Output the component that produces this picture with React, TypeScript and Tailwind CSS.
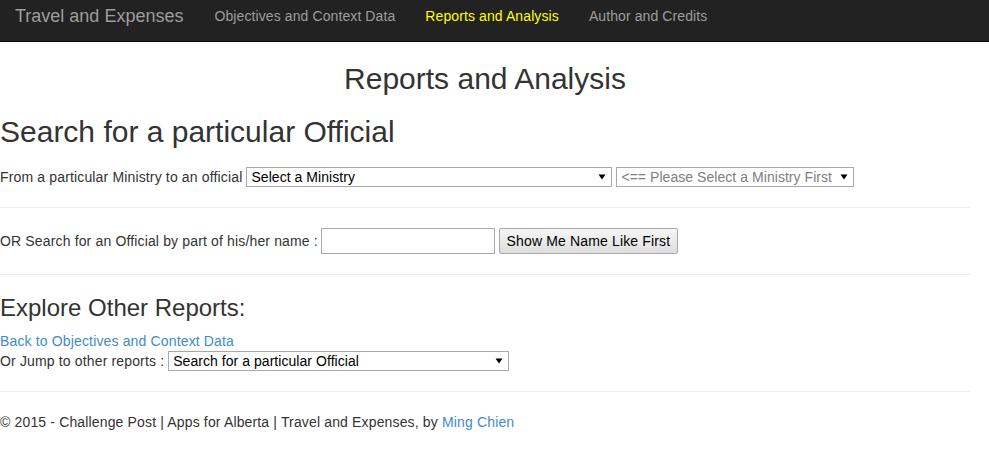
import React from "react";

function Arrow() {
  return (
    <svg width="8" height="6" viewBox="0 0 8 6" className="shrink-0">
      <polygon points="0.5,0.5 7.5,0.5 4,5.5" fill="#000" />
    </svg>
  );
}

function FakeSelect({ width, text, muted }: { width: string; text: string; muted?: boolean }) {
  return (
    <div
      className={`${width} h-[20px] border border-[#a9a9a9] bg-white flex items-center justify-between pl-[4px] pr-[5px] text-[14px] leading-[18px] tracking-[0.05px] ${
        muted ? "text-[#808080]" : "text-black"
      }`}
    >
      <span className="whitespace-nowrap overflow-hidden">{text}</span>
      <Arrow />
    </div>
  );
}

export default function App() {
  return (
    <div
      className="w-[989px] min-h-[458px] bg-white text-[#333] text-[14px] leading-[20px] tracking-[0.15px]"
      style={{ fontFamily: '"Liberation Sans", Arial, Helvetica, sans-serif' }}
    >
      <nav className="h-[42px] bg-[#222] border-b border-[#080808] flex items-start pt-[6px] tracking-[0.1px]">
        <a className="pl-[15px] pr-[15px] text-[18px] leading-[20px] text-[#9d9d9d] tracking-normal">Travel and Expenses</a>
        <a className="px-[15px] ml-[1px] text-[14px] leading-[20px] text-[#9d9d9d]">Objectives and Context Data</a>
        <a className="px-[15px] text-[14px] leading-[20px] text-[#ffff00]">Reports and Analysis</a>
        <a className="px-[15px] text-[14px] leading-[20px] text-[#9d9d9d]">Author and Credits</a>
      </nav>

      <div className="w-[970px]">
        <h2 className="mt-[20px] text-[30px] leading-[33px] text-center font-normal tracking-normal">Reports and Analysis</h2>
        <h2 className="mt-[20px] text-[30px] leading-[33px] font-normal tracking-normal">Search for a particular Official</h2>

        <div className="mt-[19px] flex items-center h-[20px]">
          <span className="whitespace-nowrap">From a particular Ministry to an official</span>
          <div className="ml-[4px]">
            <FakeSelect width="w-[366px]" text="Select a Ministry" />
          </div>
          <div className="ml-[4px]">
            <FakeSelect width="w-[238px]" text="<== Please Select a Ministry First" muted />
          </div>
        </div>

        <hr className="mt-[20px] mb-[20px] border-0 border-t border-[#eee]" />

        <div className="flex items-center h-[26px]">
          <span className="whitespace-nowrap">OR Search for an Official by part of his/her name :</span>
          <input
            type="text"
            className="ml-[3px] w-[174px] h-[26px] border border-[#a9a9a9] bg-white outline-none"
          />
          <button className="ml-[4px] w-[179px] h-[26px] border border-[#a9a9a9] rounded-[2px] bg-gradient-to-b from-[#f6f6f6] to-[#dedede] text-black text-[14px] leading-[20px]">
            Show Me Name Like First
          </button>
        </div>

        <hr className="mt-[20px] mb-[20px] border-0 border-t border-[#eee]" />

        <h3 className="text-[24px] leading-[26px] font-normal tracking-normal">Explore Other Reports:</h3>
        <div className="mt-[10px]">
          <a className="text-[#428bca]">Back to Objectives and Context Data</a>
        </div>
        <div className="flex items-center h-[20px]">
          <span className="whitespace-nowrap">Or Jump to other reports :</span>
          <div className="ml-[4px]">
            <FakeSelect width="w-[341px]" text="Search for a particular Official" />
          </div>
        </div>

        <hr className="mt-[20px] mb-[20px] border-0 border-t border-[#eee]" />

        <footer>
          <p>
            © 2015 - Challenge Post | Apps for Alberta | Travel and Expenses, by{" "}
            <a className="text-[#428bca]">Ming Chien</a>
          </p>
        </footer>
      </div>
    </div>
  );
}
